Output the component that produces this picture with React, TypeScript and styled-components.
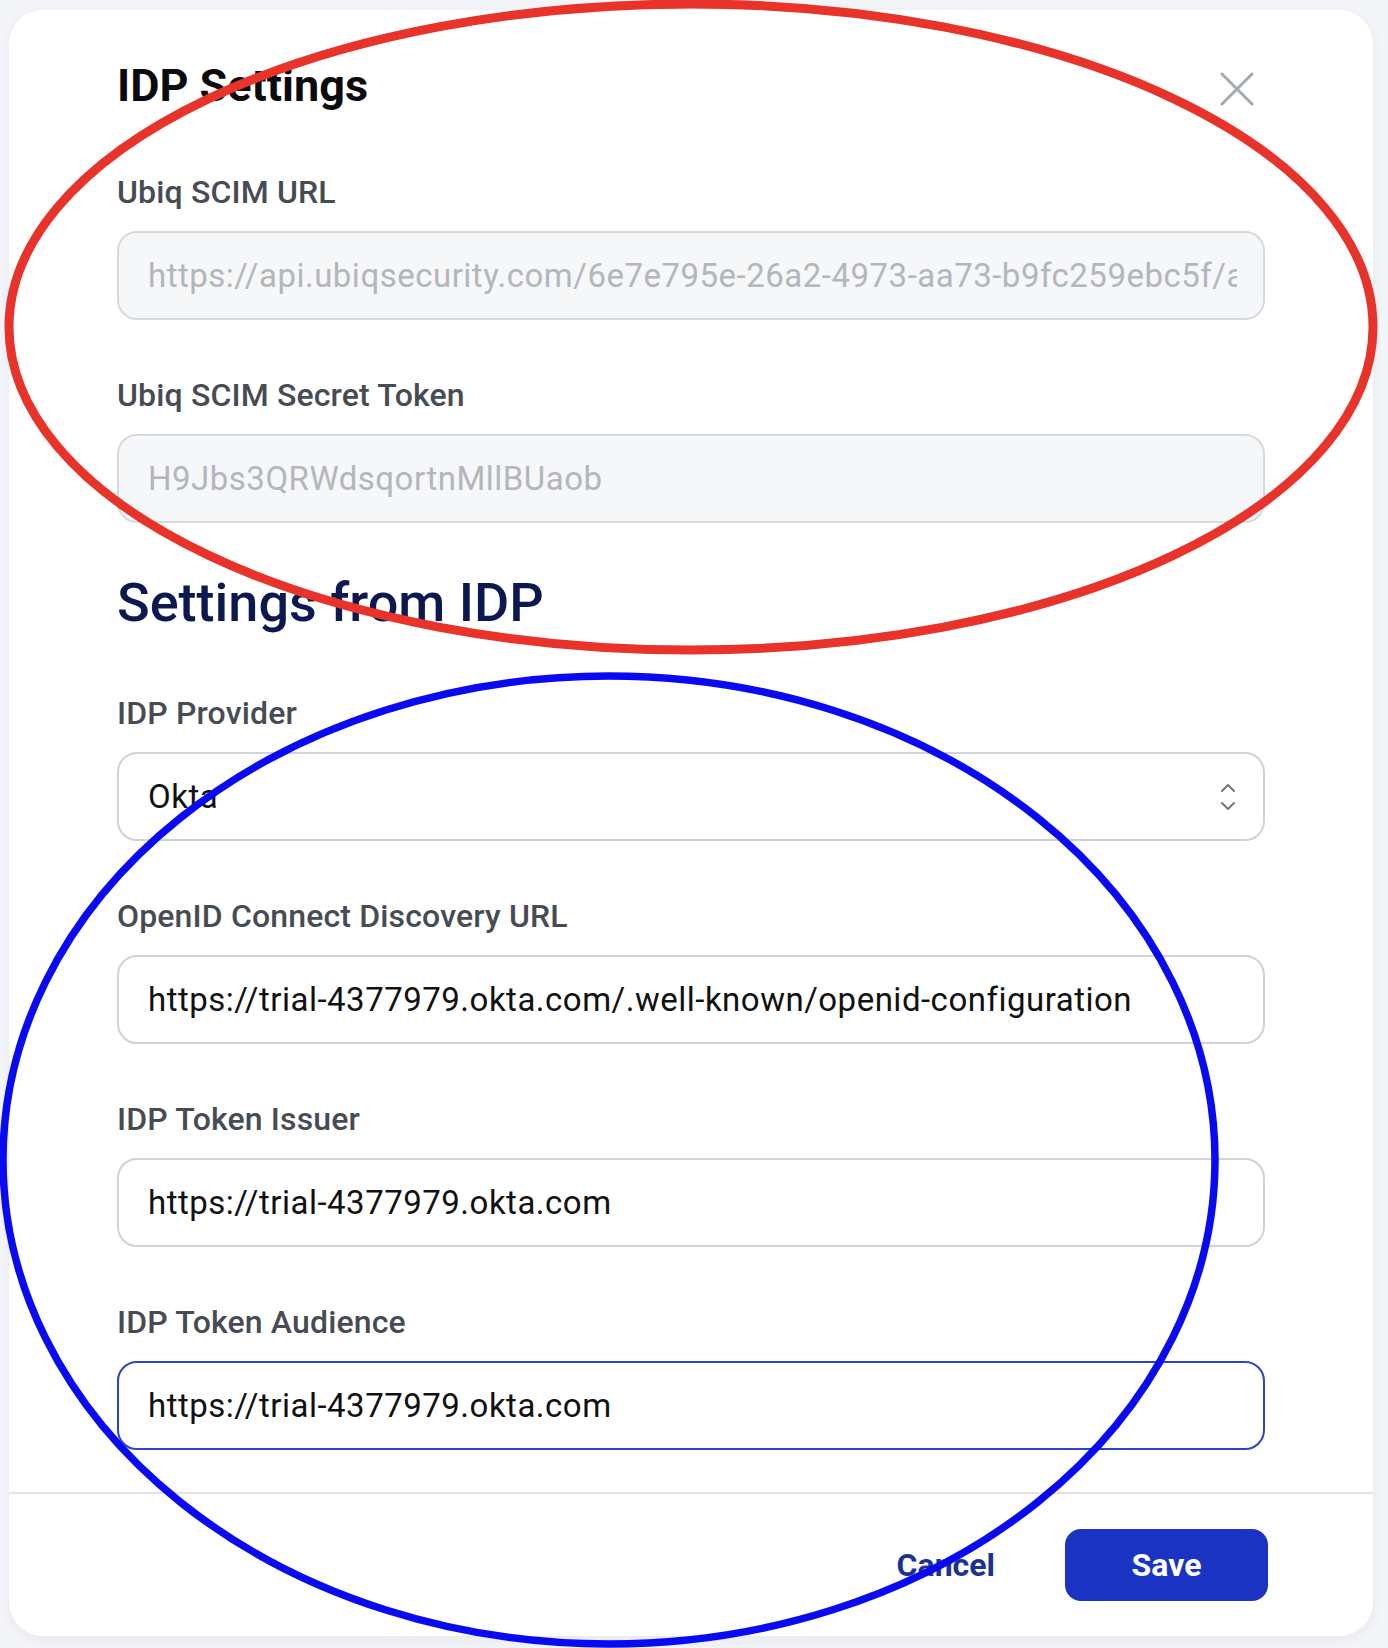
import React from "react";
import styled, { createGlobalStyle } from "styled-components";

const GlobalStyle = createGlobalStyle`
  html, body {
    margin: 0;
    padding: 0;
    background: #f4f5f9;
    font-family: Roboto, "Liberation Sans", Arial, sans-serif;
  }
  * { box-sizing: border-box; }
`;

const Page = styled.div`
  position: relative;
  width: 1388px;
  min-height: 1648px;
  padding: 10px 15px 12px 9px;
`;

const Card = styled.div`
  width: 1364px;
  height: 1626px;
  background: #ffffff;
  border-radius: 34px;
  box-shadow: 0 4px 14px rgba(30, 40, 90, 0.06);
  display: flex;
  flex-direction: column;
`;

const Body = styled.div`
  padding: 47px 108px 0 108px;
  display: flex;
  flex-direction: column;
`;

const Header = styled.div`
  display: flex;
  align-items: center;
  justify-content: space-between;
  height: 58px;
`;

const Title = styled.h2`
  margin: 0;
  font-size: 45px;
  line-height: 58px;
  font-weight: 700;
  color: #0b0b0f;
`;

const CloseButton = styled.button`
  border: none;
  background: transparent;
  padding: 0;
  margin-right: 11px;
  margin-top: 6px;
  width: 34px;
  height: 34px;
  display: flex;
  align-items: center;
  justify-content: center;
  cursor: pointer;
`;

const Field = styled.div<{ $gap?: number }>`
  display: flex;
  flex-direction: column;
  margin-top: ${(p) => (p.$gap ?? 51)}px;
`;

const Label = styled.label`
  font-size: 32px;
  line-height: 48px;
  letter-spacing: 0.15px;
  font-weight: 500;
  color: #474c54;
  margin-bottom: 15px;
`;

const Input = styled.input<{ $focused?: boolean }>`
  height: 89px;
  width: 100%;
  border-radius: 20px;
  border: 2px solid ${(p) => (p.$focused ? "#2c45c4" : "#cfd2d8")};
  background: #ffffff;
  padding: 0 26px 0 29px;
  font-family: Roboto, "Liberation Sans", Arial, sans-serif;
  font-size: 33px;
  letter-spacing: 0.5px;
  color: #111111;
  outline: none;

  &:disabled {
    background: #f6f7f9;
    border-color: #d6d9de;
    color: #b3b6bb;
    -webkit-text-fill-color: #b3b6bb;
    opacity: 1;
  }
`;

const SelectBox = styled.div`
  height: 89px;
  width: 100%;
  border-radius: 20px;
  border: 2px solid #cfd2d8;
  background: #ffffff;
  padding: 0 26px 0 29px;
  display: flex;
  align-items: center;
  justify-content: space-between;
  font-size: 33px;
  letter-spacing: 0.5px;
  color: #111111;
`;

const SectionHeading = styled.h3`
  margin: 44px 0 0 0;
  font-size: 54px;
  line-height: 72px;
  font-weight: 500;
  color: #0c1850;
`;

const Footer = styled.div`
  flex: 1;
  border-top: 2px solid #e4e4e6;
  margin-top: 42px;
  display: flex;
  align-items: center;
  justify-content: flex-end;
  gap: 70px;
  padding-right: 105px;
`;

const CancelButton = styled.button`
  border: none;
  background: transparent;
  padding: 0;
  font-family: Roboto, "Liberation Sans", Arial, sans-serif;
  font-size: 32px;
  font-weight: 700;
  color: #1b3194;
  cursor: pointer;
`;

const SaveButton = styled.button`
  width: 203px;
  height: 72px;
  border: none;
  border-radius: 16px;
  background: #1a33c2;
  color: #ffffff;
  font-family: Roboto, "Liberation Sans", Arial, sans-serif;
  font-size: 32px;
  font-weight: 700;
  cursor: pointer;
`;

const Annotations = styled.svg`
  position: absolute;
  left: 0;
  top: 0;
  width: 1388px;
  height: 1648px;
  pointer-events: none;
`;

const CloseIcon = () => (
  <svg width="34" height="34" viewBox="0 0 34 34" fill="none">
    <path d="M2 2 L32 32 M32 2 L2 32" stroke="#a3a9b2" strokeWidth="3" strokeLinecap="round" />
  </svg>
);

const ChevronsIcon = () => (
  <svg width="18" height="30" viewBox="0 0 18 30" fill="none">
    <path d="M3 9 L9 3 L15 9" stroke="#737884" strokeWidth="2" strokeLinecap="round" strokeLinejoin="round" />
    <path d="M3 21 L9 27 L15 21" stroke="#737884" strokeWidth="2" strokeLinecap="round" strokeLinejoin="round" />
  </svg>
);

export default function App() {
  return (
    <>
      <GlobalStyle />
      <Page>
        <Card>
          <Body>
            <Header>
              <Title>IDP Settings</Title>
              <CloseButton aria-label="Close">
                <CloseIcon />
              </CloseButton>
            </Header>

            <Field $gap={53}>
              <Label>Ubiq SCIM URL</Label>
              <Input
                disabled
                readOnly
                value="https://api.ubiqsecurity.com/6e7e795e-26a2-4973-aa73-b9fc259ebc5f/api/scim/v2"
              />
            </Field>

            <Field>
              <Label>Ubiq SCIM Secret Token</Label>
              <Input disabled readOnly value="H9Jbs3QRWdsqortnMllBUaob" />
            </Field>

            <SectionHeading>Settings from IDP</SectionHeading>

            <Field $gap={50}>
              <Label>IDP Provider</Label>
              <SelectBox>
                <span>Okta</span>
                <ChevronsIcon />
              </SelectBox>
            </Field>

            <Field>
              <Label>OpenID Connect Discovery URL</Label>
              <Input readOnly value="https://trial-4377979.okta.com/.well-known/openid-configuration" />
            </Field>

            <Field>
              <Label>IDP Token Issuer</Label>
              <Input readOnly value="https://trial-4377979.okta.com" />
            </Field>

            <Field>
              <Label>IDP Token Audience</Label>
              <Input $focused readOnly value="https://trial-4377979.okta.com" />
            </Field>
          </Body>

          <Footer>
            <CancelButton>Cancel</CancelButton>
            <SaveButton>Save</SaveButton>
          </Footer>
        </Card>

        <Annotations viewBox="0 0 1388 1648">
          <ellipse cx="691" cy="327" rx="682" ry="323" fill="none" stroke="#e8332a" strokeWidth="9" />
          <ellipse cx="609" cy="1160" rx="606" ry="484" fill="none" stroke="#0a0af2" strokeWidth="7.5" />
        </Annotations>
      </Page>
    </>
  );
}
